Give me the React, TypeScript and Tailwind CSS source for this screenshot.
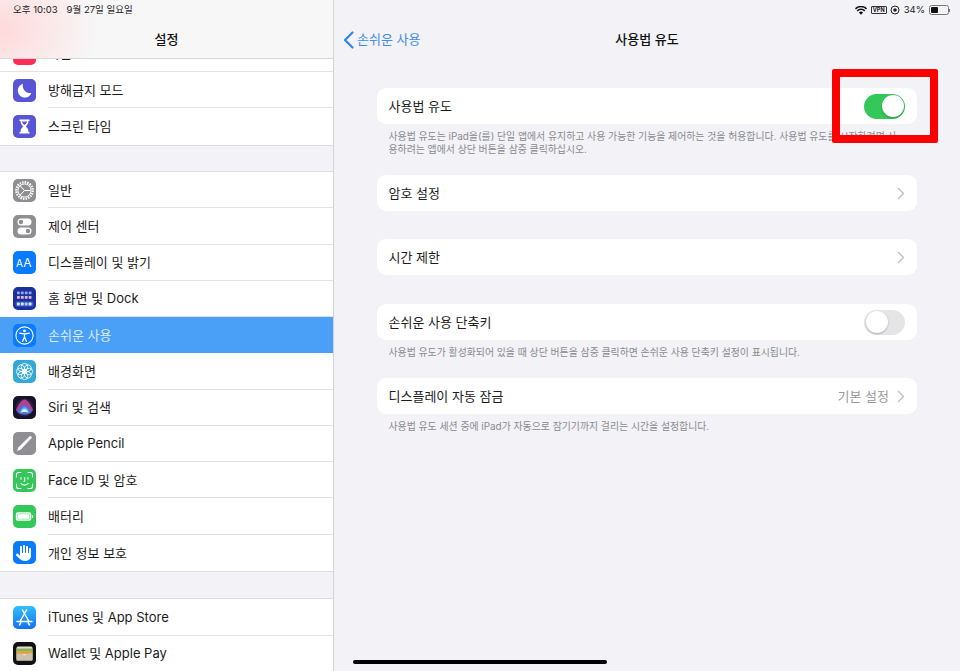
import React from "react";
import { FaHand } from "react-icons/fa6";

const font = "font-['Inter','Noto_Sans_CJK_KR',sans-serif]";

function Tile({ bg, children }: { bg: string; children?: React.ReactNode }) {
  return (
    <div className={`w-[23px] h-[23px] rounded-[5px] overflow-hidden flex items-center justify-center shrink-0 ${bg}`}>
      {children}
    </div>
  );
}

const S = ({ children }: { children: React.ReactNode }) => (
  <svg viewBox="0 0 23 23" width="23" height="23" fill="none">{children}</svg>
);

const Moon = () => (
  <S><path d="M10 4.800a7 7 0 1 0 8.400 9.200A7.400 7.400 0 0 1 10 4.800z" fill="#fff" /></S>
);
const Hourglass = () => (
  <S>
    <path d="M6.500 4.500h10v1.600h-1c0 3-1.600 4-2.600 5.400 1 1.400 2.600 2.400 2.600 5.400h1v1.600h-10v-1.600h1c0-3 1.600-4 2.600-5.400-1-1.400-2.600-2.400-2.600-5.400h-1z" fill="#fff" />
    <path d="M9 6.500h5c0 1.400-1.400 2.600-2.500 3.600C10.400 9.100 9 7.900 9 6.500z" fill="#5856d6" />
  </S>
);
const Gear = () => (
  <S>
    <circle cx="11.500" cy="11.500" r="8.300" stroke="#fff" strokeWidth="2.200" strokeDasharray="1.500 1.100" />
    <circle cx="11.500" cy="11.500" r="6.600" stroke="#fff" strokeWidth="1" />
    <path d="M11.500 11.500 6.800 6.500M11.500 11.500 6.800 16.500M11.500 11.500h6" stroke="#fff" strokeWidth="1" />
  </S>
);
const Control = () => (
  <S>
    <rect x="4.500" y="3.500" width="14" height="7" rx="3.500" fill="#fff" />
    <circle cx="8" cy="7" r="2.200" fill="#8e8e93" />
    <rect x="4.500" y="12.500" width="14" height="7" rx="3.500" fill="#fff" />
    <circle cx="15" cy="16" r="2.200" fill="#8e8e93" />
  </S>
);
const HomeGrid = () => (
  <S>
    {[0, 1, 2, 3].map((i) => (
      <g key={i}>
        <rect x={4 + i * 3.9} y="4.500" width="2.800" height="2.800" rx="0.600" fill="#8fa6f5" />
        <rect x={4 + i * 3.9} y="9" width="2.800" height="2.800" rx="0.600" fill="#e6b9c9" />
      </g>
    ))}
    <rect x="2.500" y="14.500" width="18" height="5" rx="1.500" fill="#3b5fc9" />
    {[0, 1, 2, 3].map((i) => (
      <rect key={i} x={4 + i * 3.9} y="15.600" width="2.800" height="2.800" rx="0.600" fill={i === 2 ? "#9fd0f5" : "#dfe6f7"} />
    ))}
  </S>
);
const Access = () => (
  <S>
    <circle cx="11.500" cy="11.500" r="8.600" stroke="#fff" strokeWidth="1.100" />
    <circle cx="11.500" cy="6.900" r="1.400" fill="#fff" />
    <path d="M6.700 9.200c3 .8 6.600.8 9.600 0M11.500 10v3.200M11.500 13l-2 4.400M11.500 13l2 4.400" stroke="#fff" strokeWidth="1.300" strokeLinecap="round" />
  </S>
);
const Flower = () => (
  <S>
    {[0, 45, 90, 135, 180, 225, 270, 315].map((a) => (
      <circle key={a} cx="11.500" cy="6.700" r="3.300" stroke="#fff" strokeWidth="0.800" transform={`rotate(${a} 11.500 11.500)`} />
    ))}
    <circle cx="11.500" cy="11.500" r="2" fill="#fff" />
  </S>
);
const Siri = () => (
  <S>
    <defs>
      <radialGradient id="siriA" cx="0.500" cy="0.600" r="0.500">
        <stop offset="0" stopColor="#fff" />
        <stop offset="0.400" stopColor="#4fc3f7" />
        <stop offset="1" stopColor="#4fc3f7" stopOpacity="0" />
      </radialGradient>
    </defs>
    <circle cx="11.500" cy="11.500" r="9" fill="#2a2440" />
    <path d="M3 14C6 7 9 3.500 11.500 3.500S17 7 20 14c-3 5-14 5-17 0z" fill="#c2449c" opacity="0.900" />
    <path d="M4.500 16c2-4 4.500-7 7-7s5 3 7 7c-3 3.500-11 3.500-14 0z" fill="#4a6fd8" />
    <path d="M5 18 11.500 9l6.500 9-6.500-3.500z" fill="url(#siriA)" />
    <path d="M7.500 17c1.500-2.500 2.800-3.800 4-3.800s2.500 1.300 4 3.800c-2-1.400-6-1.400-8 0z" fill="#dff3ff" />
  </S>
);
const Pencil = () => (
  <S><path d="M17.200 3.800 19 5.600 7.800 17.400 4 19l1.500-3.800z" fill="#fff" /></S>
);
const Face = () => (
  <S>
    <path d="M3.500 8V5.500a2 2 0 0 1 2-2H8M15 3.500h2.500a2 2 0 0 1 2 2V8M19.500 15v2.500a2 2 0 0 1-2 2H15M8 19.500H5.500a2 2 0 0 1-2-2V15" stroke="#fff" strokeWidth="1.100" strokeLinecap="round" />
    <path d="M8 8.500v1.600M15 8.500v1.600M11.700 8.500v3.700h-.8" stroke="#fff" strokeWidth="1.100" strokeLinecap="round" />
    <path d="M8 14.700c2 1.700 5 1.700 7 0" stroke="#fff" strokeWidth="1.100" strokeLinecap="round" />
  </S>
);
const Battery = () => (
  <S>
    <rect x="2.800" y="7.300" width="15.400" height="8.400" rx="1.800" fill="#fff" />
    <rect x="4.300" y="8.800" width="12.400" height="5.400" rx="0.800" fill="#fff" stroke="#4cd964" strokeWidth="0.500" />
    <rect x="18.800" y="10" width="1.300" height="3" rx="0.600" fill="#fff" />
  </S>
);
const Store = () => (
  <S>
    <path d="M13.500 4 7 15.500M9.500 4 16 15.500M4 15.500h15M6.500 19l1.200-2M16.500 19l-1.200-2" stroke="#fff" strokeWidth="1.500" strokeLinecap="round" />
  </S>
);
const Wallet = () => (
  <S>
    <rect x="3.500" y="4.500" width="16" height="14" rx="1.500" fill="#e8e0cf" />
    <rect x="3.500" y="6.500" width="16" height="3" fill="#7fb563" />
    <rect x="3.500" y="9" width="16" height="3" fill="#e3a33c" />
    <path d="M3.500 11.500h5.500a2.600 2.600 0 0 0 5 0h5.500v7h-16z" fill="#c9c0ad" />
  </S>
);

const Chevron = () => (
  <svg width="8" height="13" viewBox="0 0 8 13" fill="none" className="shrink-0">
    <path d="M1.500 1.500 6.500 6.500 1.500 11.500" stroke="#c4c4c7" strokeWidth="1.500" strokeLinecap="round" strokeLinejoin="round" />
  </svg>
);

type Item = { label: string; icon: React.ReactNode; selected?: boolean };

function Row({ item, last }: { item: Item; last?: boolean }) {
  return (
    <div className={`h-[36.25px] flex items-center pl-[12.500px] ${item.selected ? "bg-[#4a9ff7]" : "bg-white"}`}>
      {item.icon}
      <div className={`flex-1 h-full ml-[12.500px] flex items-center ${last || item.selected ? "" : "border-b border-[#e2e2e4]"}`}>
        <span className={`pt-[1.500px] text-[13px] ${item.selected ? "text-[#dbeafe]" : "text-[#1c1c1e]"}`}>{item.label}</span>
      </div>
    </div>
  );
}

const group1: Item[] = [
  { label: "방해금지 모드", icon: <Tile bg="bg-[#5856d6]"><Moon /></Tile> },
  { label: "스크린 타임", icon: <Tile bg="bg-[#5856d6]"><Hourglass /></Tile> },
];
const group2: Item[] = [
  { label: "일반", icon: <Tile bg="bg-[#8e8e93]"><Gear /></Tile> },
  { label: "제어 센터", icon: <Tile bg="bg-[#8e8e93]"><Control /></Tile> },
  { label: "디스플레이 및 밝기", icon: <Tile bg="bg-[#0a7aff]"><span className="text-white text-[12px] leading-none tracking-[0.500px]"><span className="text-[10px]">A</span>A</span></Tile> },
  { label: "홈 화면 및 Dock", icon: <Tile bg="bg-[#1c2f9c]"><HomeGrid /></Tile> },
  { label: "손쉬운 사용", selected: true, icon: <Tile bg="bg-[#0a7aff]"><Access /></Tile> },
  { label: "배경화면", icon: <Tile bg="bg-[#36a8d8]"><Flower /></Tile> },
  { label: "Siri 및 검색", icon: <Tile bg="bg-[#16142a]"><Siri /></Tile> },
  { label: "Apple Pencil", icon: <Tile bg="bg-[#8e8e93]"><Pencil /></Tile> },
  { label: "Face ID 및 암호", icon: <Tile bg="bg-[#34c759]"><Face /></Tile> },
  { label: "배터리", icon: <Tile bg="bg-[#34c759]"><Battery /></Tile> },
  { label: "개인 정보 보호", icon: <Tile bg="bg-[#0a7aff]"><FaHand className="text-white text-[16px]" /></Tile> },
];
const group3: Item[] = [
  { label: "iTunes 및 App Store", icon: <Tile bg="bg-gradient-to-b from-[#35c0fb] to-[#1a6ef0]"><Store /></Tile> },
  { label: "Wallet 및 Apple Pay", icon: <Tile bg="bg-[#111]"><Wallet /></Tile> },
];

function Sidebar() {
  return (
    <aside className="w-[334px] shrink-0 h-full border-r border-[#d4d4d7] bg-[#f2f2f7] flex flex-col overflow-hidden">
      <header className="h-[59px] shrink-0 border-b border-[#d9d9dc] bg-[#f7f7f8] bg-[radial-gradient(ellipse_100px_70px_at_0px_30px,#ffd9d9,transparent)]">
        <div className="h-[19px] pt-[1px] pl-[13px] flex items-center text-[9.500px] text-[#222] gap-[9px]">
          <span>오후 10:03</span>
          <span>9월 27일 일요일</span>
        </div>
        <div className="h-[40px] pt-[2px] flex items-center justify-center text-[13px] font-medium text-[#111]">설정</div>
      </header>
      <div className="h-[13px] shrink-0 flex items-end bg-white pl-[12.500px] border-b border-[#e2e2e4] overflow-hidden">
        <div className="w-[23px] h-[23px] rounded-[5px] bg-[#ff2d55] mb-[6px] shrink-0" />
        <span className="ml-[12.500px] mb-[10px] text-[13px] leading-[16px] text-[#1c1c1e]">사운드</span>
      </div>
      <div className="bg-white">
        {group1.map((it, i) => <Row key={it.label} item={it} last={i === group1.length - 1} />)}
      </div>
      <div className="h-[27.500px] shrink-0 border-y border-[#dedee1]" />
      <div className="bg-white">
        {group2.map((it, i) => <Row key={it.label} item={it} last={i === group2.length - 1} />)}
      </div>
      <div className="h-[28.500px] shrink-0 border-y border-[#dedee1]" />
      <div className="bg-white flex-1">
        {group3.map((it) => <Row key={it.label} item={it} />)}
      </div>
    </aside>
  );
}

function Toggle({ on }: { on?: boolean }) {
  return (
    <div className={`w-[41px] h-[25px] rounded-full p-[1.500px] flex ${on ? "bg-[#34c759] justify-end" : "bg-[#e5e5e8] justify-start"}`}>
      <div className="w-[22px] h-[22px] rounded-full bg-white shadow-[0_1px_2px_rgba(0,0,0,0.25)]" />
    </div>
  );
}

function Card({ label, right, className = "" }: { label: string; right?: React.ReactNode; className?: string }) {
  return (
    <div className={`h-[36px] bg-white rounded-[9px] pl-[11.500px] pr-[12px] flex items-center justify-between ${className}`}>
      <span className="pt-[2px] text-[13px] text-[#1c1c1e]">{label}</span>
      {right}
    </div>
  );
}

const Foot = ({ children, className = "" }: { children: React.ReactNode; className?: string }) => (
  <p className={`pl-[11.500px] pr-[16px] text-[9.900px] leading-[13px] text-[#8a8a8e] break-all ${className}`}>{children}</p>
);

function StatusIcons() {
  return (
    <div className="h-[19px] pt-[1px] pr-[10px] flex items-center justify-end gap-[3.500px] text-[9.500px] text-[#222]">
      <svg width="12" height="9" viewBox="0 0 12 9">
        <path d="M6 8.800 3.900 6.500a3 3 0 0 1 4.200 0zM2.800 5.400 1.700 4.200a6 6 0 0 1 8.600 0L9.200 5.400a4.500 4.500 0 0 0-6.400 0zM.9 3.400 0 2.300a8.400 8.400 0 0 1 12 0l-.9 1.100a7 7 0 0 0-10.200 0z" fill="#111" />
      </svg>
      <span className="w-[16px] h-[8px] border border-[#333] rounded-[1px] text-[5.500px] leading-[6px] text-center font-bold">VPN</span>
      <svg width="10" height="10" viewBox="0 0 10 10" fill="none">
        <circle cx="5" cy="5" r="4" stroke="#222" strokeWidth="1" />
        <circle cx="5" cy="5" r="1.800" fill="#222" />
      </svg>
      <span>34%</span>
      <div className="w-[20px] h-[10px] border border-[#777] rounded-[2.500px] p-[1px] flex">
        <div className="w-[7px] h-full bg-[#111] rounded-[1px]" />
      </div>
      <div className="w-[1px] h-[3px] bg-[#777] -ml-[3px]" />
    </div>
  );
}

function Detail() {
  return (
    <main className="flex-1 h-full bg-[#f2f2f7] flex flex-col">
      <StatusIcons />
      <div className="h-[40px] pt-[2px] shrink-0 grid grid-cols-3 items-center">
        <div className="flex items-center pl-[9px] text-[#3f8fe8] text-[13px] gap-[3px]">
          <svg width="11" height="18" viewBox="0 0 11 18" fill="none">
            <path d="M9.500 1.500 2 9l7.500 7.500" stroke="#2f86e8" strokeWidth="2.200" strokeLinecap="round" strokeLinejoin="round" />
          </svg>
          <span>손쉬운 사용</span>
        </div>
        <div className="text-center text-[13px] font-medium text-[#111]">사용법 유도</div>
      </div>
      <div className="pl-[43px] pr-[43px] pt-[29px]">
        <Card label="사용법 유도" right={<Toggle on />} />
        <Foot className="mt-[5.500px]">
          사용법 유도는 iPad을(를) 단일 앱에서 유지하고 사용 가능한 기능을 제어하는 것을 허용합니다. 사용법 유도를 시작하려면 사용하려는 앱에서 상단 버튼을 삼중 클릭하십시오.
        </Foot>
        <Card label="암호 설정" right={<Chevron />} className="mt-[19.500px]" />
        <Card label="시간 제한" right={<Chevron />} className="mt-[28px]" />
        <Card label="손쉬운 사용 단축키" right={<Toggle />} className="mt-[29px]" />
        <Foot className="mt-[5.500px]">
          사용법 유도가 활성화되어 있을 때 상단 버튼을 삼중 클릭하면 손쉬운 사용 단축키 설정이 표시됩니다.
        </Foot>
        <Card
          label="디스플레이 자동 잠금"
          className="mt-[19.500px]"
          right={
            <div className="flex items-center gap-[8px]">
              <span className="pt-[2px] text-[13px] text-[#9a9a9e]">기본 설정</span>
              <Chevron />
            </div>
          }
        />
        <Foot className="mt-[5.500px]">
          사용법 유도 세션 중에 iPad가 자동으로 잠기기까지 걸리는 시간을 설정합니다.
        </Foot>
      </div>
    </main>
  );
}

export default function App() {
  return (
    <div className={`relative w-[960px] h-[671px] overflow-hidden flex ${font}`}>
      <Sidebar />
      <Detail />
      {/* Annotation rectangle drawn over the screenshot */}
      <div className="absolute left-[832px] top-[69px] w-[106px] h-[74px] border-[8px] border-[#fe0000] rounded-[2px]" />
      <div className="absolute left-[353px] top-[660px] w-[254px] h-[4px] rounded-full bg-black" />
    </div>
  );
}
